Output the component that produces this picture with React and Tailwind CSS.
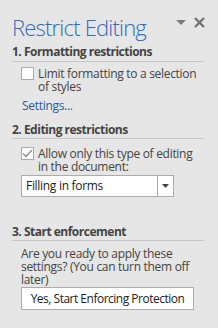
export default function App() {
  return (
    <div
      className="w-[218px] h-[328px] bg-[#e6e6e6] overflow-hidden text-[#444444]"
      style={{ fontFamily: '"Open Sans", "Noto Sans", sans-serif' }}
    >
      <div className="flex items-start justify-between pl-[12px] pr-[13px] pt-[14px]">
        <div className="text-[22px] leading-[26px] font-light text-[#2f6dbd] tracking-[-0.8px]">Restrict Editing</div>
        <div className="flex items-center gap-[8px] pt-[3px]">
          <svg width="10" height="6" viewBox="0 0 10 6">
            <path d="M0 0H10L5 5Z" fill="#7a7a7a" />
          </svg>
          <svg width="11" height="11" viewBox="0 0 11 11">
            <path d="M1 1L10 10M10 1L1 10" stroke="#6f6f6f" strokeWidth="2.2" />
          </svg>
        </div>
      </div>

      <div className="pl-[12px] pr-[14px]">
        <div className="mt-[4px] text-[12px] font-bold leading-[16px] border-b border-[#c8c8c8] pb-[1px] tracking-[-0.5px]">
          1. Formatting restrictions
        </div>
        <div className="flex items-start gap-[4px] pl-[9px] mt-[5px]">
          <div className="w-[13px] h-[13px] bg-white border border-[#ababab] shrink-0" />
          <div className="text-[12px] leading-[13px] tracking-[-0.3px]">Limit formatting to a selection of styles</div>
        </div>
        <div className="pl-[10px] mt-[6px] text-[12px] leading-[14px] text-[#2a5a9a] tracking-[-0.3px]">Settings...</div>

        <div className="mt-[9px] text-[12px] font-bold leading-[16px] border-b border-[#c8c8c8] tracking-[-0.5px]">
          2. Editing restrictions
        </div>
        <div className="flex items-start gap-[4px] pl-[9px] mt-[8px]">
          <div className="w-[13px] h-[13px] bg-white border border-[#ababab] shrink-0 flex items-center justify-center">
            <svg width="11" height="9" viewBox="0 0 11 9">
              <path d="M1 4.5L4 7.5L10 1" stroke="#8a8a8a" strokeWidth="1.3" fill="none" />
            </svg>
          </div>
          <div className="text-[12px] leading-[13px] tracking-[-0.3px]">Allow only this type of editing in the document:</div>
        </div>
        <div className="ml-[9px] mt-[2px] w-[153px] h-[22px] flex bg-white border border-[#ababab]">
          <div className="flex-1 pl-[4px] text-[12px] leading-[20px] text-[#222222] tracking-[-0.3px]">Filling in forms</div>
          <div className="w-[16px] border-l border-[#ababab] flex items-center justify-center">
            <svg width="7" height="4" viewBox="0 0 7 4">
              <path d="M0 0H7L3.5 4Z" fill="#444444" />
            </svg>
          </div>
        </div>

        <div className="mt-[27px] text-[12px] font-bold leading-[16px] border-b border-[#c8c8c8] tracking-[-0.5px]">
          3. Start enforcement
        </div>
        <div className="pl-[9px] mt-[6px] text-[12px] leading-[13px] tracking-[-0.3px]">
          Are you ready to apply these settings? (You can turn them off later)
        </div>
        <div className="ml-[9px] mt-[1px] w-[173px] h-[23px] bg-white border border-[#ababab] text-[12px] leading-[21px] text-center text-[#222222] tracking-[-0.5px]">
          Yes, Start Enforcing Protection
        </div>
      </div>
    </div>
  );
}
